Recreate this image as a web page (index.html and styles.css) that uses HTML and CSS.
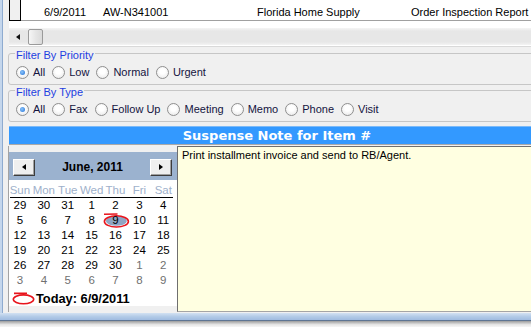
FILE: index.html
```
<!DOCTYPE html>
<html>
<head>
<meta charset="utf-8">
<link rel="stylesheet" href="styles.css">
</head>
<body>
<div class="window">
  <div class="frame">
    <div class="frame-edge"></div>
    <div class="content">
      <div class="grid">
        <div class="row">
          <div class="rowhead"></div>
          <div class="cell c1">6/9/2011</div>
          <div class="cell c2">AW-N341001</div>
          <div class="cell c3">Florida Home Supply</div>
          <div class="cell c4">Order Inspection Report</div>
        </div>
        <div class="grid-gap"></div>
        <div class="hscroll"><span class="sarrow"></span><span class="thumb"></span></div>
      </div>

      <div class="group">
        <div class="group-title">Filter By Priority</div>
        <div class="radios">
          <label class="radio checked"><span class="dot"></span>All</label>
          <label class="radio"><span class="dot"></span>Low</label>
          <label class="radio"><span class="dot"></span>Normal</label>
          <label class="radio"><span class="dot"></span>Urgent</label>
        </div>
      </div>

      <div class="group group2">
        <div class="group-title">Filter By Type</div>
        <div class="radios">
          <label class="radio checked"><span class="dot"></span>All</label>
          <label class="radio"><span class="dot"></span>Fax</label>
          <label class="radio"><span class="dot"></span>Follow Up</label>
          <label class="radio"><span class="dot"></span>Meeting</label>
          <label class="radio"><span class="dot"></span>Memo</label>
          <label class="radio"><span class="dot"></span>Phone</label>
          <label class="radio"><span class="dot"></span>Visit</label>
        </div>
      </div>

      <div class="panel-title">Suspense Note for Item #</div>

      <div class="lower">
        <div class="calendar">
          <div class="cal-head">
            <span class="navbtn"><span class="tri-left"></span></span>
            <span class="month">June, 2011</span>
            <span class="navbtn"><span class="tri-right"></span></span>
          </div>
          <div class="cal-body">
            <div class="names">
              <span>Sun</span><span>Mon</span><span>Tue</span><span>Wed</span><span>Thu</span><span>Fri</span><span>Sat</span>
            </div>
            <div class="rule"></div>
            <div class="dates">
              <span>29</span><span>30</span><span>31</span><span>1</span><span>2</span><span>3</span><span>4</span>
              <span>5</span><span>6</span><span>7</span><span>8</span>
              <span class="today"><svg class="today-mark" width="30" height="17" viewBox="0 0 30 17"><ellipse cx="14.4" cy="9" rx="10.5" ry="4.8" fill="#8fa5c3"/><path d="M2 2.2 L15.5 2" stroke="#e8141c" stroke-width="1.6" fill="none"/><ellipse cx="14.4" cy="9.4" rx="12" ry="5.6" stroke="#e8141c" stroke-width="1.6" fill="none"/></svg><span class="num">9</span></span>
              <span>10</span><span>11</span>
              <span>12</span><span>13</span><span>14</span><span>15</span><span>16</span><span>17</span><span>18</span>
              <span>19</span><span>20</span><span>21</span><span>22</span><span>23</span><span>24</span><span>25</span>
              <span>26</span><span>27</span><span>28</span><span>29</span><span>30</span><span class="trail">1</span><span class="trail">2</span>
              <span class="trail">3</span><span class="trail">4</span><span class="trail">5</span><span class="trail">6</span><span class="trail">7</span><span class="trail">8</span><span class="trail">9</span>
            </div>
            <div class="today-line">
              <svg class="today-icon" width="23" height="13" viewBox="0 0 23 13"><path d="M2 1.4 L15 1.2" stroke="#e8141c" stroke-width="1.6" fill="none"/><ellipse cx="11.5" cy="7.3" rx="10.2" ry="4.4" stroke="#e8141c" stroke-width="1.6" fill="none"/></svg>
              <span>Today: 6/9/2011</span>
            </div>
          </div>
        </div>
        <div class="note">Print installment invoice and send to RB/Agent.</div>
      </div>
    </div>
  </div>
  <div class="frame-bottom"></div>
  <div class="shadow"></div>
</div>
</body>
</html>
```
FILE: styles.css
```
* { box-sizing: border-box; }
html, body { margin: 0; padding: 0; }
body {
  width: 531px;
  height: 327px;
  overflow: hidden;
  background: #fff;
  font-family: "Liberation Sans", Arial, sans-serif;
  font-size: 11px;
  color: #000;
}
.window {
  width: 545px;
  height: 327px;
  display: flex;
  flex-direction: column;
}
.frame {
  height: 313px;
  display: flex;
  background: #f0f0f0;
}
.frame-edge {
  width: 3px;
  border-left: 2px solid #c4d6ec;
  border-right: 1px solid #8eabd0;
}
.content {
  flex: 1;
  padding-left: 5px;
  display: flex;
  flex-direction: column;
}

/* grid */
.grid {
  margin-left: 1px;
  background: #fff;
  padding-bottom: 1px;
  border-bottom: 1px solid #d9d9d9;
}
.row { display: flex; height: 21px; }
.rowhead {
  width: 12px;
  border: 1px solid #000;
  border-top: none;
  background: #f0f0f0;
}
.cell {
  border-bottom: 1px solid #a0a0a0;
  padding-top: 4px;
  line-height: 16px;
  white-space: nowrap;
}
.c1 { width: 78px; padding-left: 23px; }
.c2 { width: 154px; padding-left: 4px; }
.c3 { width: 154px; padding-left: 4px; }
.c4 { flex: 1; padding-left: 4px; }
.grid-gap { height: 7px; }
.hscroll {
  height: 17px;
  display: flex;
  align-items: center;
  background: linear-gradient(#f5f5f5, #e7e7e7 18%, #e7e7e7 82%, #f3f3f3);
}
.sarrow {
  margin-left: 7px;
  width: 0;
  height: 0;
  border-right: 4px solid #111;
  border-top: 3.5px solid transparent;
  border-bottom: 3.5px solid transparent;
}
.thumb {
  margin-left: 8px;
  width: 15px;
  height: 16px;
  border: 1px solid #9a9a9a;
  border-radius: 2px;
  background: linear-gradient(90deg, #f6f6f6, #e6e6e6 50%, #dadada);
}

/* group boxes */
.group {
  margin-top: 6px;
  border: 1px solid #c6c6c6;
  border-radius: 3px;
  padding: 0 0 5px 7px;
}
.group2 { margin-top: 5px; }
.group-title {
  width: fit-content;
  margin: -5px 0 0 -1px;
  padding: 0 1px;
  line-height: 13px;
  color: #1e3ee0;
  background: #f0f0f0;
}
.radios {
  display: flex;
  align-items: center;
  margin-top: 3px;
  height: 14px;
  line-height: 14px;
}
.radio {
  display: flex;
  align-items: center;
  margin-right: 7px;
  color: #14143f;
  white-space: nowrap;
}
.dot {
  position: relative;
  width: 13px;
  height: 13px;
  margin-right: 4px;
  border-radius: 50%;
  border: 1px solid #8f8f8f;
  background: radial-gradient(circle at 50% 40%, #ffffff 30%, #e4e4e4);
}
.radio.checked .dot::after {
  content: "";
  position: absolute;
  left: 3px;
  top: 3px;
  width: 5px;
  height: 5px;
  border-radius: 50%;
  background: radial-gradient(circle at 40% 40%, #8cc4fa, #1f70d6);
}

/* header bar */
.panel-title {
  margin-top: 4px;
  margin-left: 1px;
  height: 19px;
  border-top: 1px solid #7cbaf8;
  border-bottom: 1px solid #a9a9a9;
  background: #3399ff;
  color: #fff;
  font-family: "DejaVu Sans", Verdana, sans-serif;
  font-weight: bold;
  font-size: 13px;
  line-height: 17px;
  text-align: center;
  white-space: nowrap;
}

/* lower section */
.lower {
  margin-top: 1px;
  height: 166px;
  display: flex;
  border-left: 1px solid #a3a3a3;
}
.calendar {
  width: 168px;
  padding-top: 6px;
  background: #f0f0f0;
  display: flex;
  flex-direction: column;
}
.cal-head {
  height: 28px;
  padding: 2px 5px 0 4px;
  background: #9bb2cf;
  display: flex;
  align-items: center;
  justify-content: space-between;
}
.navbtn {
  width: 22px;
  height: 17px;
  display: flex;
  align-items: center;
  justify-content: center;
  background: #efefef;
  border: 1px solid;
  border-color: #ffffff #3c3c3c #3c3c3c #ffffff;
  box-shadow: inset -1px -1px 0 #a0a0a0;
}
.tri-left, .tri-right {
  width: 0;
  height: 0;
  border-top: 3.5px solid transparent;
  border-bottom: 3.5px solid transparent;
}
.tri-left { border-right: 4px solid #000; }
.tri-right { border-left: 4px solid #000; }
.month {
  font-weight: bold;
  font-size: 12px;
}
.cal-body {
  background: #fff;
  padding: 4px 0 1px 0;
}
.names, .dates {
  display: grid;
  grid-template-columns: repeat(7, 23.9px);
  margin-left: -1px;
  text-align: center;
}
.names {
  font-size: 11.5px;
  line-height: 13px;
  color: #a0b1cb;
}
.rule {
  height: 1px;
  margin: 0 4px 0 1px;
  background: #000;
}
.dates {
  font-size: 11.5px;
  grid-auto-rows: 15px;
  line-height: 15px;
}
.dates .trail { color: #707070; }
.today { position: relative; }
.today-mark {
  position: absolute;
  left: -2px;
  top: -1px;
}
.today .num { position: relative; }
.today-line {
  margin-top: 3px;
  height: 14px;
  padding-left: 3px;
  display: flex;
  align-items: center;
  font-weight: bold;
  font-size: 12.8px;
  white-space: nowrap;
}
.today-icon { margin-right: 1px; flex: none; }
.note {
  flex: 1;
  background: #ffffe1;
  border-left: 1px solid #6f6f6f;
  border-top: 1px solid #6f6f6f;
  border-bottom: 1px solid #a5a5a5;
  padding: 1px 0 0 4px;
  line-height: 14px;
  white-space: nowrap;
}

/* window frame */
.frame-bottom {
  height: 8px;
  background: linear-gradient(#d2e1f2, #b3cbe7 50%, #9fbbe0);
  border-bottom: 1px solid #5e7593;
}
.shadow {
  height: 6px;
  background: linear-gradient(#9c9c9c, #e6e6e6 60%, #f6f6f6);
}
```
